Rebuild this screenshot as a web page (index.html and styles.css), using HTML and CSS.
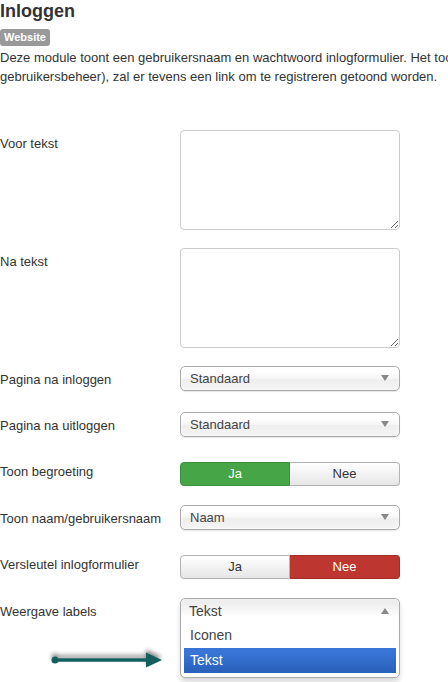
FILE: index.html
```html
<!DOCTYPE html>
<html>
<head>
    <meta charset="utf-8">
    <link rel="stylesheet" href="styles.css">
    <title>Inloggen</title>
</head>
<body>
    <h2 class="module-title">Inloggen</h2>
    <span class="badge">Website</span>
    <p class="module-desc">Deze module toont een gebruikersnaam en wachtwoord inlogformulier. Het toont ook een link om een vergeten wachtwoord op te vragen. Als gebruikersregistratie is ingeschakeld (in de basisinstellingen van<br>gebruikersbeheer), zal er tevens een link om te registreren getoond worden.</p>

    <div class="form">
        <div class="control-group">
            <label class="control-label">Voor tekst</label>
            <div class="controls"><textarea class="text-box"></textarea></div>
        </div>
        <div class="control-group">
            <label class="control-label">Na tekst</label>
            <div class="controls"><textarea class="text-box"></textarea></div>
        </div>
        <div class="control-group row-short">
            <label class="control-label">Pagina na inloggen</label>
            <div class="controls"><div class="chosen"><span>Standaard</span><i class="caret"></i></div></div>
        </div>
        <div class="control-group row-short">
            <label class="control-label">Pagina na uitloggen</label>
            <div class="controls"><div class="chosen"><span>Standaard</span><i class="caret"></i></div></div>
        </div>
        <div class="control-group row-toggle">
            <label class="control-label">Toon begroeting</label>
            <div class="controls">
                <div class="btn-group">
                    <span class="btn btn-yes">Ja</span>
                    <span class="btn">Nee</span>
                </div>
            </div>
        </div>
        <div class="control-group row-short">
            <label class="control-label">Toon naam/gebruikersnaam</label>
            <div class="controls"><div class="chosen"><span>Naam</span><i class="caret"></i></div></div>
        </div>
        <div class="control-group row-toggle">
            <label class="control-label">Versleutel inlogformulier</label>
            <div class="controls">
                <div class="btn-group">
                    <span class="btn">Ja</span>
                    <span class="btn btn-no">Nee</span>
                </div>
            </div>
        </div>
        <div class="control-group row-short">
            <label class="control-label">Weergave labels</label>
            <div class="controls">
                <div class="chosen-open">
                    <div class="chosen-head"><span>Tekst</span><i class="caret caret-up"></i></div>
                    <ul class="chosen-list">
                        <li>Iconen</li>
                        <li class="highlighted">Tekst</li>
                    </ul>
                </div>
            </div>
        </div>
    </div>

    <!-- annotation arrow pointing at the open list -->
    <svg class="pointer" width="120" height="30" viewBox="0 0 120 30">
        <line x1="6" y1="15" x2="100" y2="15" stroke="#135f5f" stroke-width="3.5"/>
        <circle cx="6" cy="15" r="3.5" fill="#135f5f"/>
        <polygon points="97,7.5 113,15 97,22.5" fill="#135f5f"/>
    </svg>
</body>
</html>
```

FILE: styles.css
```css
body {
    margin: 0;
    overflow: hidden;
    position: relative;
    font-family: "Liberation Sans", Arial, sans-serif;
    font-size: 13px;
    color: #333;
    background: #fff;
}

.module-title {
    margin: 0;
    padding-top: 1px;
    font-size: 18px;
    line-height: 20px;
    font-weight: bold;
}

.badge {
    display: inline-block;
    margin-top: 8px;
    padding: 2px 4px;
    font-size: 11px;
    line-height: 13px;
    font-weight: bold;
    color: #fff;
    background: #999;
    border-radius: 3px;
}

.module-desc {
    margin: 2px 0 0;
    width: 1200px;
    line-height: 19px;
    white-space: nowrap;
}

.form {
    margin-top: 44px;
}

.control-group {
    display: flex;
    margin-bottom: 18px;
}

.row-short {
    min-height: 28px;
}

.row-toggle {
    min-height: 29px;
}

.control-label {
    width: 180px;
    flex: none;
    padding-top: 5px;
    line-height: 18px;
}

.controls {
    width: 220px;
}

.text-box {
    display: block;
    box-sizing: border-box;
    width: 220px;
    height: 100px;
    margin: 0;
    border: 1px solid #ccc;
    border-radius: 4px;
    background: #fff;
    resize: vertical;
}

.chosen {
    display: flex;
    align-items: center;
    justify-content: space-between;
    box-sizing: border-box;
    height: 25px;
    padding: 0 10px 1px 9px;
    border: 1px solid #aaa;
    border-radius: 5px;
    background: linear-gradient(#fff 20%, #f6f6f6 50%, #eee 52%, #f4f4f4);
    box-shadow: 0 0 3px #fff inset, 0 1px 1px rgba(0, 0, 0, .1);
    color: #444;
}

.caret {
    width: 0;
    height: 0;
    border-left: 4px solid transparent;
    border-right: 4px solid transparent;
    border-top: 6px solid #888;
}

.caret-up {
    border-top: 0;
    border-bottom: 6px solid #888;
}

.btn-group {
    display: flex;
    margin-top: 4px;
}

.btn {
    box-sizing: border-box;
    width: 110px;
    height: 24px;
    line-height: 22px;
    text-align: center;
    color: #333;
    border: 1px solid #b3b3b3;
    background: linear-gradient(#fff, #e6e6e6);
}

.btn:first-child {
    border-radius: 4px 0 0 4px;
}

.btn:last-child {
    border-radius: 0 4px 4px 0;
    border-left: 0;
}

.btn-yes {
    color: #fff;
    border-color: #3c8f3c;
    background: #46a546;
}

.btn-no {
    color: #fff;
    border-color: #a22c26;
    background: #bd362f;
}

.chosen-open {
    box-sizing: border-box;
    width: 220px;
    border: 1px solid #aaa;
    border-radius: 5px;
    background: #fff;
    box-shadow: 0 4px 5px rgba(0, 0, 0, .15);
}

.chosen-head {
    display: flex;
    align-items: center;
    justify-content: space-between;
    height: 23px;
    padding: 0 10px 0 8px;
    color: #444;
    background: linear-gradient(#eee 20%, #fff 80%);
    border-radius: 5px 5px 0 0;
    font-size: 14px;
}

.chosen-list {
    list-style: none;
    margin: 0;
    padding: 1px 3px 4px;
    font-size: 14px;
    color: #444;
}

.chosen-list li {
    height: 25px;
    line-height: 24px;
    padding-left: 6px;
}

.chosen-list .highlighted {
    color: #fff;
    background: linear-gradient(#3875d7 20%, #2a62bc 90%);
}

.pointer {
    position: absolute;
    left: 49px;
    top: 645px;
    filter: drop-shadow(0 -3px 2px rgba(0, 0, 0, .45));
}
```
